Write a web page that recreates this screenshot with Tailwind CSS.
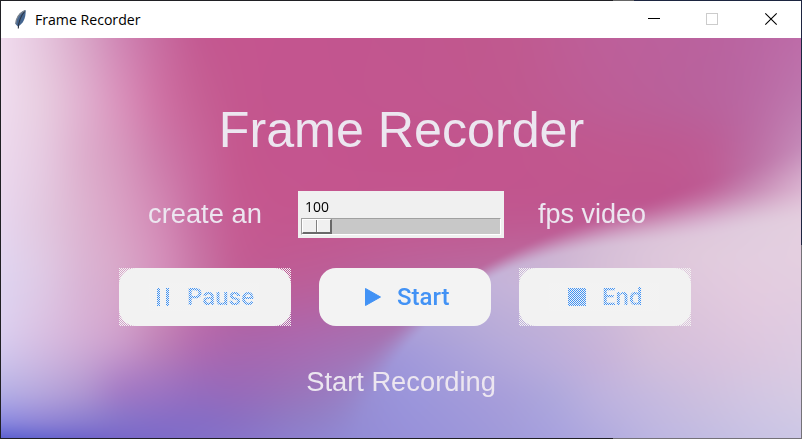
<!DOCTYPE html>
<html lang="en">
<head>
<meta charset="utf-8">
<title>Frame Recorder</title>
<script src="https://cdn.jsdelivr.net/npm/@tailwindcss/browser@4"></script>
</head>
<body class="w-[802px] h-[439px] overflow-hidden bg-[#202024]">
<div class="relative w-[802px] h-[439px] p-px flex flex-col font-['Liberation_Sans',Arial,sans-serif]">
  <div class="absolute top-0 right-0 w-[169px] h-px bg-[#1c2540]"></div>
  <div class="absolute top-0 left-[613px] w-[21px] h-px bg-[#666]"></div>
  <div class="absolute bottom-0 right-0 w-[189px] h-px bg-[#747278]"></div>
  <div class="absolute right-0 top-0 w-px h-[245px] bg-[#1c2540]"></div>
  <div class="absolute right-0 bottom-0 w-px h-[194px] bg-[#747278]"></div>
  <header class="h-[37px] shrink-0 bg-white flex items-center pl-[12px]">
    <svg class="w-4 h-[22px] shrink-0" viewBox="0 0 16 22"><path d="M12.600 1C7.500 2.500 3 8 2.500 15l2.300 2.500c5-2.500 8.300-8 7.800-16.500z" fill="#44658f"/><path d="M12 2C8.500 6 5.500 11 5.300 19.500" fill="none" stroke="#2b3544" stroke-width="1.100"/><path d="M12 1.500C6.800 4 3 9 2.800 15" fill="none" stroke="#7c858f" stroke-width="1.200"/></svg>
    <h1 class="ml-[6px] text-[15px] leading-5 text-black font-['Open_Sans','Noto_Sans',sans-serif] whitespace-nowrap"><span class="relative -top-px inline-block origin-left scale-x-[.94]">Frame Recorder</span></h1>
    <div class="ml-auto flex">
      <svg class="w-[58px] h-[37px]" viewBox="0 0 58 37"><path d="M23 17.500h12" stroke="#000"/></svg>
      <svg class="w-[58px] h-[37px]" viewBox="0 0 58 37"><rect x="23.500" y="12.500" width="11" height="11" fill="none" stroke="#ccc"/></svg>
      <svg class="w-[60px] h-[37px]" viewBox="0 0 60 37"><path d="M24.300 12.300l11.400 11.400m0-11.400l-11.400 11.400" stroke="#000" stroke-width="1.100"/></svg>
    </div>
  </header>
  <main class="relative w-[800px] h-[400px] overflow-hidden">
    <canvas id="backdrop" width="800" height="400" class="absolute inset-0"></canvas>
    <div class="relative h-full flex flex-col items-center text-[#ece6f0]">
      <h2 class="mt-[62px] h-[61px] pl-px text-[50.2px] leading-[60px] whitespace-nowrap">Frame Recorder</h2>
      <div class="mt-[30px] h-[47px] w-full flex items-center text-[27.3px] leading-8 whitespace-nowrap">
        <span class="relative -top-px ml-[147px] w-[150px]">create an</span>
        <div class="w-[206px] h-[47px] bg-[#f0f0f0] px-[3px] pt-[5px] text-black">
          <div class="pl-[4px] h-[22px] text-[15px] leading-[20px] font-['Open_Sans','Noto_Sans',sans-serif]"><span class="inline-block origin-left scale-x-[.93]">100</span></div>
          <div class="h-[17px] w-[200px] bg-[#c8c8c8] border border-t-[#a0a0a0] border-l-[#a0a0a0] border-r-white border-b-white">
            <div class="flex w-[30px] h-[15px] bg-[#f0f0f0] border-t border-l border-t-white border-l-white border-r-2 border-b-2 border-r-[#696969] border-b-[#696969]"><i class="w-[14px] border-r border-[#808080]"></i><i class="flex-1 border-l border-white"></i></div>
          </div>
        </div>
        <span class="relative -top-px ml-[34px] text-[27px]">fps video</span>
      </div>
      <div class="mt-[30px] flex gap-7 ml-[8px]">
        <button class="w-[172px] h-[58px]"><svg class="w-[172px] h-[58px]" viewBox="0 0 172 58">
          <defs><pattern id="dots" width="2" height="2" patternUnits="userSpaceOnUse"><path d="M0 0h1v1H0zM1 1h1v1H1z" fill="#f3f3f3" shape-rendering="crispEdges"/></pattern></defs>
          <rect width="172" height="58" fill="url(#dots)"/><rect width="172" height="58" rx="17" fill="#f2f2f2"/>
          <g fill="#3f92f5"><path d="M38 20h3v18h-3zM47 20h3v18h-3z"/><text x="68" y="37" font-family="Roboto, sans-serif" font-size="24" font-weight="500" textLength="67">Pause</text></g>
          <rect x="30" y="15" width="110" height="28" fill="url(#dots)"/></svg></button>
        <button class="w-[172px] h-[58px]"><svg class="w-[172px] h-[58px]" viewBox="0 0 172 58">
          <rect width="172" height="58" rx="17" fill="#f3f3f3"/>
          <g fill="#4292f5"><path d="M46.500 20.500l15 8.500-15 8.500z" stroke="#4292f5" stroke-linejoin="round"/><text x="78" y="37" font-family="Roboto, sans-serif" font-size="24" font-weight="500" textLength="52.500">Start</text></g></svg></button>
        <button class="w-[172px] h-[58px]"><svg class="w-[172px] h-[58px]" viewBox="0 0 172 58">
          <rect width="172" height="58" fill="url(#dots)"/><rect width="172" height="58" rx="17" fill="#f2f2f2"/>
          <g fill="#3f92f5"><path d="M49 20h18v18H49z"/><text x="83" y="37" font-family="Roboto, sans-serif" font-size="24" font-weight="500" textLength="40.500">End</text></g>
          <rect x="30" y="15" width="110" height="28" fill="url(#dots)"/></svg></button>
      </div>
      <p class="mt-[40px] text-[27.3px] leading-8 whitespace-nowrap">Start Recording</p>
    </div>
  </main>
</div>
<script>
const canvas = document.getElementById('backdrop'), ctx = canvas.getContext('2d');
const W = 800, H = 400;
// Smooth curve through the values v placed at the stops s
function curve(s, v) {
  const n = s.length, m = v.map((_, i) => { const a = Math.max(0, i - 1), b = Math.min(n - 1, i + 1); return (v[b] - v[a]) / (s[b] - s[a]); });
  return x => {
    let i = 0; while (i < n - 2 && x >= s[i + 1]) i++;
    const h = s[i + 1] - s[i], t = Math.max(0, Math.min(1, (x - s[i]) / h)), t2 = t * t, t3 = t2 * t;
    return (2 * t3 - 3 * t2 + 1) * v[i] + (t3 - 2 * t2 + t) * h * m[i] + (3 * t2 - 2 * t3) * v[i + 1] + (t3 - t2) * h * m[i + 1];
  };
}
// Grid of colours blended along both axes; gives a list of channel curves per column
function mesh(xs, ys, rows) {
  const grid = rows.map(r => r.split(' ').map(s => [0, 2, 4].map(i => parseInt(s.slice(i, i + 2), 16))));
  const across = grid.map(row => [0, 1, 2].map(c => curve(xs, row.map(p => p[c]))));
  return x => [0, 1, 2].map(c => curve(ys, across.map(r => r[c](x))));
}
const base = mesh([0, 40, 80, 120, 160, 200, 240, 300, 400, 500, 600, 700, 750, 800], [0, 60, 120, 180, 240, 300, 350, 380, 400], [
  'f0dcee e6c6de daa8c9 d086b4 c86ca0 c45a92 c4568f c3558f c1568f c0598f bd5f99 ba629e ba66a2 bd6ca8',
  'efdcee e8cce0 e0b0cf d890ba ce72a4 c66095 c4578f c3558f c2568f c0588f bd5d96 b9629c ba69a3 be78ae',
  'ecd9ed e6cae1 deb0ce d798be ce7cab c8669b c5588f c4558f c3548d c2558e c0588f be5c94 bd6fa4 c78fbb',
  'e7d6ee e2c8e0 ddb4d1 d9a0c4 d288b4 c86ca0 c55b92 c3578f c25991 c05991 bf5a93 bf6299 c382b0 d6acca',
  'dfd4f0 dec8e4 dab5d5 d7a6c9 d28fbb c674a6 c05f97 bc5e98 b9659e b96fa4 bd81b2 cba7c9 dac5da e0cade',
  'd8ccee d6bee2 d2aed6 cc9cca c082b8 b46cae ac66ab ab69ae a676b4 a98ac0 b09fce bbb0d8 c4bbde d5cbe3',
  'b8b2e6 b8a8dd b298d2 a67ec6 9e74c1 986cbc 996bb9 9b74bb 9a87ca 9892d6 9f99d8 b2aada bfb6df cfc7e6',
  '8f8de0 9388d7 8f80d0 8974c9 886ec6 886dc4 8c70c2 917cc5 948bd0 9791d8 a49ddb b8b1df c3bce2 cdc6e6',
  '5d61cf 6765ce 7065cb 7968c9 7e6bc8 836fc8 8874c9 8e80ce 938ed7 9992da a9a3df bcb5e1 c5bfe3 cbc6e6'
]);
const petal = mesh([300, 350, 400, 450, 500, 550, 600, 650, 700, 750, 800], [150, 180, 210, 240, 280, 320, 360, 400], [
  'b090c8 b090c8 b499cb b8a0cc c0a0cc c7a2c8 c9a6c8 cca8c8 d2a9c8 d7adca dfbdd6',
  'aa92ca aa92ca b09ccf bba5cf c4a5cb cba9cb d1b0ce d7bad3 dcc1d9 dfc8db e3cdde',
  'aa92ca aa92ca b09ccf bba8d2 c5acd0 cdb2d1 d5bdd6 dcc5da e0cadc e2cddf e4cfe0',
  'aa92ca aa92ca b0a0d6 bdaed7 c5b3d8 ccb7d7 d5bed7 dcc4da e0c9dd e3ccdf e3cee0',
  'a692ca a694cd ada0d7 b4a8d8 bcaed9 c3b2d8 ccb8d8 d7c0d9 dcc5dc e0c9df e0cce1',
  '9c88ca 9e8fcf a198d9 a9a0da b2a7da bbaddb c6b3da d0bddb d6c1dd dac6df dccbe2',
  '967ec4 978bd0 9a94da a099da a79eda aea7dc bcb1de c5b9df ccbfdf d1c5e2 d5cae3',
  '8f82cf 928bd5 9790d9 9b95da a09ada a7a1de b1abdf bcb5e1 c2bce2 c8c2e4 ccc7e6'
]);
// Height of the petal's edge for each column, and how soft it is there
const edgeX = [270, 300, 330, 350, 370, 387, 412, 450, 490, 540, 600, 660, 740, 800];
const edge = curve(edgeX, [460, 424, 387, 360, 334, 313, 288, 256, 231, 210, 193, 180, 160, 142]);
const soft = curve([270, 300, 350, 390, 420, 450, 500, 600, 700, 800], [90, 75, 46, 23, 15, 12, 11, 18, 30, 40]);
const img = ctx.createImageData(W, H);
for (let x = 0; x < W; x++) {
  const b = base(x), p = petal(x), e = edge(x), s = soft(x);
  for (let y = 0; y < H; y++) {
    let k = x > 270 ? Math.max(0, Math.min(1, (y - e + s) / (2 * s))) : 0;
    k = k * k * (3 - 2 * k) * Math.min(1, Math.max(0, (x - 270) / 90));
    const o = (y * W + x) * 4;
    for (let c = 0; c < 3; c++) { const v = b[c](y); img.data[o + c] = k > 0 ? v + (p[c](y) - v) * k : v; }
    img.data[o + 3] = 255;
  }
}
ctx.putImageData(img, 0, 0);
</script>
</body>
</html>
